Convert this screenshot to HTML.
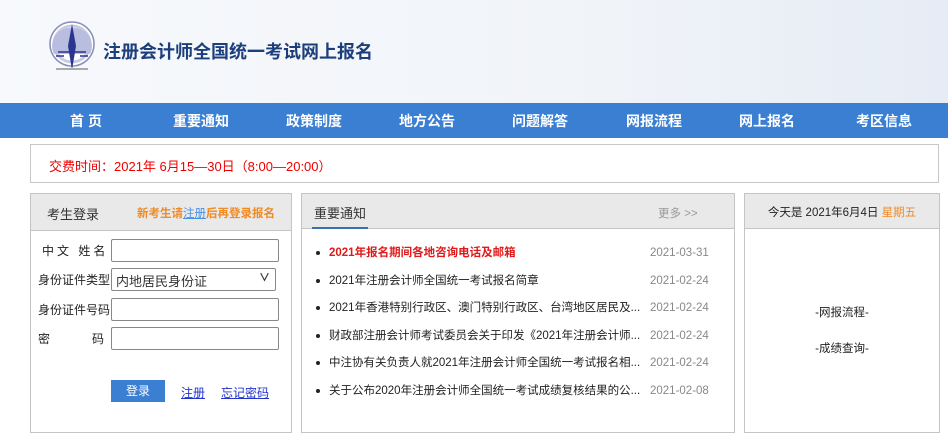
<!DOCTYPE html>
<html><head><meta charset="utf-8"><style>
*{margin:0;padding:0;box-sizing:border-box}
body{width:948px;height:440px;overflow:hidden;background:#fff;font-family:"Liberation Sans","Noto Sans CJK SC",sans-serif;font-size:12px;color:#333;position:relative}
.hd{position:absolute;left:0;top:0;width:948px;height:103px;background:linear-gradient(90deg,#f7f9fc 0%,#f1f4f9 60%,#e6ecf5 100%)}
.title{position:absolute;left:103px;top:38px;font-size:18px;font-weight:bold;color:#1c3f7c;letter-spacing:0px}
.nav{position:absolute;left:0;top:103px;width:948px;height:35px;background:#3a7fd2}
.nav span{position:absolute;top:8px;color:#fff;font-size:14px;font-weight:bold;transform:translateX(-50%);white-space:nowrap}
.notice{position:absolute;left:30px;top:144px;width:909px;height:39px;border:1px solid #c8c8c8;color:#e00;font-size:13px;padding:11px 0 0 18px}
.box{position:absolute;top:193px;height:240px;border:1px solid #c4c4c4}
.bh{height:37px;background:#e9e9e9;border-bottom:1px solid #c4c4c4;position:relative}
.lab{position:absolute;left:7px;font-size:12px;color:#222;line-height:14px}
.inp{position:absolute;left:80px;width:168px;height:23px;border:1px solid #888;border-radius:2px;background:#fff}
.news .row{position:absolute;left:14px;width:410px;height:16px;font-size:11.5px;color:#222;white-space:nowrap;line-height:16px}
.news .row:before{content:"";position:absolute;left:0;top:6px;width:4px;height:4px;border-radius:50%;background:#222}
.news .row b,.news .row em{position:absolute;left:13px;top:0;font-style:normal}
.news .row i{position:absolute;left:334px;top:0;font-style:normal;color:#888}
</style></head><body>
<div class="hd"></div>
<svg style="position:absolute;left:46px;top:18px" width="52" height="58" viewBox="0 0 52 58">
<circle cx="26" cy="26" r="22" fill="#fff" stroke="#8a8fb8" stroke-width="1.5"/>
<circle cx="26" cy="26" r="18" fill="none" stroke="#c9cce0" stroke-width="3"/>
<path d="M8 36 A18 18 0 0 1 26 10 A18 18 0 0 1 44 36 Z" fill="#b9bde0"/>
<path d="M26 6 L30 28 L26 52 L22 28 Z" fill="#2a3590"/>
<path d="M12 34 L40 34 M10 38 L18 38 M34 38 L42 38" stroke="#2a3590" stroke-width="1.5"/>
<rect x="10" y="50" width="32" height="2" fill="#aaa"/>
</svg>
<div class="title">注册会计师全国统一考试网上报名</div>
<div class="nav">
<span style="left:86px">首 页</span><span style="left:201px">重要通知</span><span style="left:314px">政策制度</span><span style="left:427px">地方公告</span><span style="left:540px">问题解答</span><span style="left:654px">网报流程</span><span style="left:767px">网上报名</span><span style="left:884px">考区信息</span>
</div>
<div class="notice">交费时间：2021年 6月15—30日（8:00—20:00）</div>

<div class="box" style="left:30px;width:262px">
<div class="bh"><span style="position:absolute;left:16px;top:10px;font-size:13px;color:#333">考生登录</span><span style="position:absolute;left:106px;top:11px;font-size:11.5px;color:#f08a24;font-weight:bold">新考生请<span style="color:#4a90e2;text-decoration:underline;font-weight:normal">注册</span>后再登录报名</span></div>
<span class="lab" style="top:50px;letter-spacing:3px;left:11px">中文 姓名</span><div class="inp" style="top:45px"></div>
<span class="lab" style="top:79px">身份证件类型</span><div class="inp" style="top:74px;width:165px;font-size:13px;padding:2px 4px">内地居民身份证<span style="position:absolute;right:5px;top:0;font-size:11px;font-weight:bold">&#8744;</span></div>
<span class="lab" style="top:109px">身份证件号码</span><div class="inp" style="top:104px"></div>
<span class="lab" style="top:138px">密</span><span class="lab" style="top:138px;left:61px">码</span><div class="inp" style="top:133px"></div>
<div style="position:absolute;left:80px;top:186px;width:54px;height:22px;background:#3a7fd2;color:#fff;text-align:center;line-height:22px;font-size:12px">登录</div>
<span style="position:absolute;left:150px;top:190px;color:#2233cc;text-decoration:underline">注册</span>
<span style="position:absolute;left:190px;top:190px;color:#2233cc;text-decoration:underline">忘记密码</span>
</div>

<div class="box news" style="left:301px;width:434px">
<div class="bh" style="height:35px"><span style="position:absolute;left:12px;top:9px;font-size:13px;color:#333">重要通知</span><div style="position:absolute;left:10px;bottom:-1px;width:56px;height:2px;background:#3a6fb0"></div><span style="position:absolute;left:356px;top:11px;color:#999;font-size:11.5px">更多 &gt;&gt;</span></div>
<div class="row" style="top:51px"><b style="color:#e01a1a">2021年报名期间各地咨询电话及邮箱</b><i>2021-03-31</i></div>
<div class="row" style="top:79px"><em>2021年注册会计师全国统一考试报名简章</em><i>2021-02-24</i></div>
<div class="row" style="top:106px"><em>2021年香港特别行政区、澳门特别行政区、台湾地区居民及...</em><i>2021-02-24</i></div>
<div class="row" style="top:134px"><em>财政部注册会计师考试委员会关于印发《2021年注册会计师...</em><i>2021-02-24</i></div>
<div class="row" style="top:161px"><em>中注协有关负责人就2021年注册会计师全国统一考试报名相...</em><i>2021-02-24</i></div>
<div class="row" style="top:189px"><em>关于公布2020年注册会计师全国统一考试成绩复核结果的公...</em><i>2021-02-08</i></div>
</div>

<div class="box" style="left:744px;width:196px">
<div class="bh" style="height:35px;text-align:center;padding-top:10px;font-size:11.5px;color:#222">今天是 2021年6月4日 <span style="color:#f08a24">星期五</span></div>
<div style="position:absolute;top:110px;width:100%;text-align:center;font-size:11.5px;color:#222">-网报流程-</div>
<div style="position:absolute;top:146px;width:100%;text-align:center;font-size:11.5px;color:#222">-成绩查询-</div>
</div>
</body></html>
